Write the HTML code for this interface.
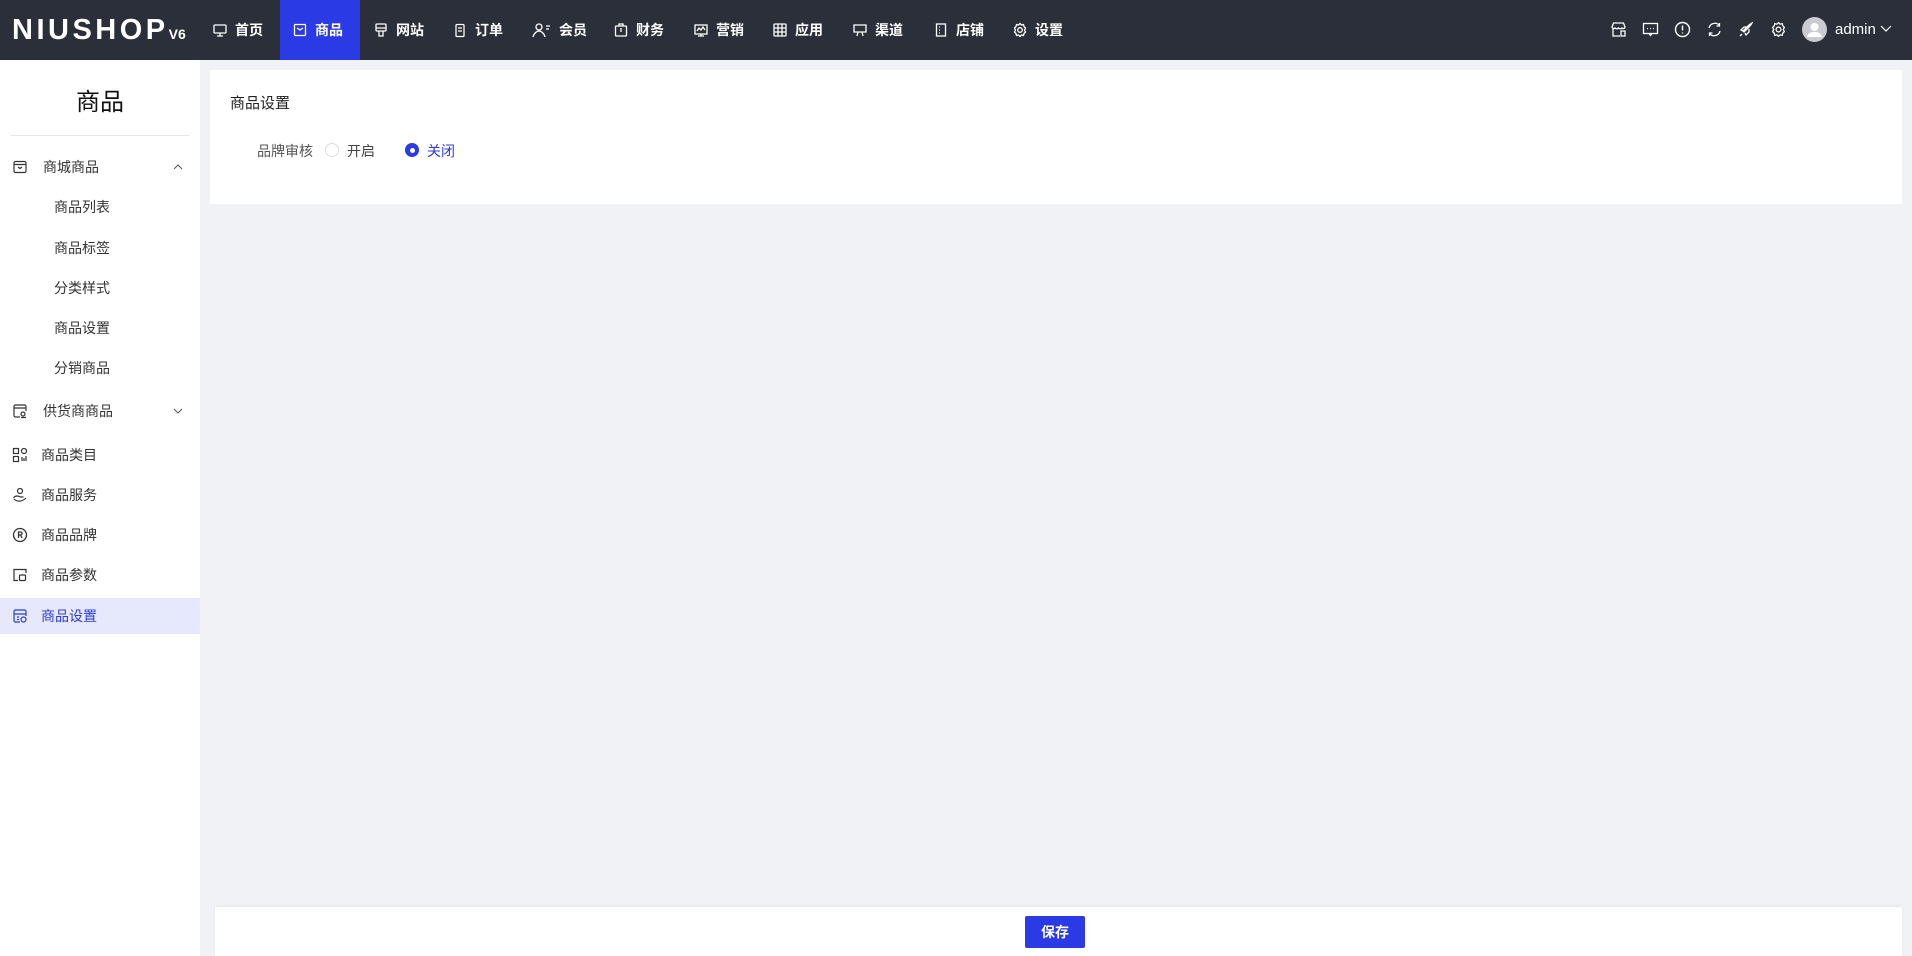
<!DOCTYPE html>
<html><head><meta charset="utf-8"><style>
*{margin:0;padding:0;box-sizing:border-box}
body{width:1912px;height:956px;overflow:hidden;background:#f0f2f5;font-family:"Liberation Sans","Noto Sans CJK SC",sans-serif;position:relative}
.hd{position:absolute;left:0;top:0;width:1912px;height:60px;background:#2b2f3a;color:#fff}
.logo{position:absolute;left:12px;top:14px;font-size:29px;font-weight:bold;letter-spacing:3.5px;font-family:"Liberation Sans",sans-serif}
.logo small{font-size:14px;margin-left:0px;letter-spacing:0}
.nav{position:absolute;top:0;height:60px;display:flex;align-items:center;font-size:14px;font-weight:bold;padding:0 12px}
.nav svg{margin-right:7px}
.act{background:#2a3be6}
.ri{position:absolute;top:21px}
.sb{position:absolute;left:0;top:60px;width:200px;height:896px;background:#fff}
.sb h1{position:absolute;left:0;width:200px;top:22px;text-align:center;font-size:24px;font-weight:normal;color:#111}
.div{position:absolute;left:10px;top:75px;width:180px;height:1px;background:#e8e8e8}
.mi{position:absolute;left:0;width:200px;height:36px;font-size:14px;color:#333;display:flex;align-items:center}
.mi .ic{position:absolute;left:12px;top:10px}
.mi span{position:absolute}
.card{position:absolute;left:210px;top:70px;width:1692px;height:134px;background:#fff}
.ft{position:absolute;left:215px;top:907px;width:1687px;height:49px;background:#fff;box-shadow:0 -1px 3px rgba(0,0,0,.05)}
.btn{position:absolute;left:810px;top:9px;width:60px;height:32px;background:#2a3be6;color:#fff;font-size:14px;font-weight:bold;text-align:center;line-height:32px;border-radius:2px}
</style></head><body>
<div class="hd">
<div class="logo">NIUSHOP<small>V6</small></div>
<div class="nav" style="left:200px"><svg width="16" height="16" viewBox="0 0 16 16" fill="none" stroke="#fff" stroke-width="1.3"><rect x="2" y="3" width="12" height="8" rx="1"/><path d="M8 11v3M5 14h6"/></svg>首页</div>
<div class="nav act" style="left:280px;width:80px"><svg width="16" height="16" viewBox="0 0 16 16" fill="none" stroke="#fff" stroke-width="1.3"><rect x="2.5" y="2.5" width="11" height="11" rx="1"/><path d="M5 6l3 2 3-2"/></svg>商品</div>
<div class="nav" style="left:361px"><svg width="16" height="16" viewBox="0 0 16 16" fill="none" stroke="#fff" stroke-width="1.3"><rect x="3" y="2" width="10" height="7" rx="1"/><path d="M3 6h10M6 9v5h4V9"/></svg>网站</div>
<div class="nav" style="left:440px"><svg width="16" height="16" viewBox="0 0 16 16" fill="none" stroke="#fff" stroke-width="1.3"><rect x="4" y="2.5" width="8" height="12" rx="1"/><path d="M6 6h4M6 9h4"/></svg>订单</div>
<div class="nav" style="left:520px"><svg width="20" height="16" viewBox="0 0 20 16" fill="none" stroke="#fff" stroke-width="1.3"><circle cx="7" cy="5" r="3"/><path d="M1 15c1-4 4-6 6-6s5 2 6 6M14 4h4M14 7h3"/></svg>会员</div>
<div class="nav" style="left:601px"><svg width="16" height="16" viewBox="0 0 16 16" fill="none" stroke="#fff" stroke-width="1.3"><rect x="2.5" y="4" width="11" height="10" rx="1"/><path d="M6 4V2h4v2M8 6v4"/></svg>财务</div>
<div class="nav" style="left:681px"><svg width="16" height="16" viewBox="0 0 16 16" fill="none" stroke="#fff" stroke-width="1.3"><rect x="2" y="3" width="12" height="9"/><path d="M4 9l2-3 2 2 2-3 2 3M8 12v2M5 14h6"/></svg>营销</div>
<div class="nav" style="left:760px"><svg width="16" height="16" viewBox="0 0 16 16" fill="none" stroke="#fff" stroke-width="1.3"><rect x="2" y="2" width="12" height="12" rx="1"/><path d="M2 6h12M2 10h12M6 2v12M10 2v12"/></svg>应用</div>
<div class="nav" style="left:840px"><svg width="16" height="16" viewBox="0 0 16 16" fill="none" stroke="#fff" stroke-width="1.3"><path d="M2 3h12v7H2zM6 10l-1 4M10 10l1 4"/></svg>渠道</div>
<div class="nav" style="left:921px"><svg width="16" height="16" viewBox="0 0 16 16" fill="none" stroke="#fff" stroke-width="1.3"><rect x="3.5" y="2" width="9" height="12"/><path d="M6 5h1M6 8h1M6 11h1"/></svg>店铺</div>
<div class="nav" style="left:1000px"><svg width="16" height="16" viewBox="0 0 16 16" fill="none" stroke="#fff" stroke-width="1.3"><circle cx="8" cy="8" r="2.3"/><path d="M8 1.5l1.5 1.5 2-.5.5 2 1.5 1.5-1 2 1 2-1.5 1.5-.5 2-2-.5L8 14.5 6.5 13l-2 .5-.5-2L2.5 10l1-2-1-2L4 4.5l.5-2 2 .5z"/></svg>设置</div>
<svg class="ri" style="left:1610px" width="17" height="17" viewBox="0 0 17 17" fill="none" stroke="#fff" stroke-width="1.3"><path d="M2 6l1.5-4h10L15 6c0 1.5-2 2-3 1-1 1-3 1-3.5 0-1 1-3 1-3.5 0-1 1-3 .5-3-1zM3 8v7h7M11 10h4v5h-4z"/></svg>
<svg class="ri" style="left:1642px" width="17" height="17" viewBox="0 0 17 17" fill="none" stroke="#fff" stroke-width="1.3"><rect x="1.5" y="2.5" width="14" height="10"/><path d="M7 12.5l1.5 2 1.5-2M5 7.5h1M8 7.5h1M11 7.5h1"/></svg>
<svg class="ri" style="left:1674px" width="17" height="17" viewBox="0 0 17 17" fill="none" stroke="#fff" stroke-width="1.4"><circle cx="8.5" cy="8.5" r="7"/><path d="M8.5 4.5v5M8.5 11.5v1"/></svg>
<svg class="ri" style="left:1706px" width="17" height="17" viewBox="0 0 17 17" fill="none" stroke="#fff" stroke-width="1.3"><path d="M3 7a6 6 0 0 1 10.5-2.5M14 10a6 6 0 0 1-10.5 2.5M13.5 2v3h-3M3.5 15v-3h3"/></svg>
<svg class="ri" style="left:1738px" width="17" height="17" viewBox="0 0 17 17" fill="none" stroke="#fff" stroke-width="1.3"><path d="M6 11l5-5c2-2 3-4 3-4s-2 1-4 3L5 10zM5 10L3 9l3-3h3M7 12l1 2 3-3V8M4 13l-2 2"/></svg>
<svg class="ri" style="left:1770px" width="17" height="17" viewBox="0 0 16 16" fill="none" stroke="#fff" stroke-width="1.2"><circle cx="8" cy="8" r="2.3"/><path d="M8 1.5l1.5 1.5 2-.5.5 2 1.5 1.5-1 2 1 2-1.5 1.5-.5 2-2-.5L8 14.5 6.5 13l-2 .5-.5-2L2.5 10l1-2-1-2L4 4.5l.5-2 2 .5z"/></svg>
<svg style="position:absolute;left:1802px;top:17px" width="25" height="25" viewBox="0 0 25 25"><circle cx="12.5" cy="12.5" r="12.5" fill="#c9cbd0"/><circle cx="12.5" cy="10" r="4" fill="#fff"/><path d="M5 20c1-4 4-5 7.5-5s6.5 1 7.5 5z" fill="#fff"/></svg>
<div style="position:absolute;left:1835px;top:21px;font-size:15px">admin</div>
<svg style="position:absolute;left:1880px;top:25px" width="12" height="8" viewBox="0 0 12 8" fill="none" stroke="#fff" stroke-width="1.2"><path d="M1 1l5 5 5-5"/></svg>
</div>
<div class="sb">
<h1>商品</h1>
<div class="div"></div>
<div class="mi" style="top:89px"><svg class="ic" width="16" height="16" viewBox="0 0 16 16" fill="none" stroke="#333" stroke-width="1.2"><rect x="2" y="2.5" width="12" height="11" rx="1.5"/><path d="M2 5.5h12M6 8l2 1.5L10 8"/></svg><span style="left:43px">商城商品</span><svg style="position:absolute;left:173px;top:15px" width="10" height="6" viewBox="0 0 10 6" fill="none" stroke="#555"><path d="M1 5l4-4 4 4"/></svg></div>
<div class="mi" style="top:129px"><span style="left:54px">商品列表</span></div>
<div class="mi" style="top:170px"><span style="left:54px">商品标签</span></div>
<div class="mi" style="top:210px"><span style="left:54px">分类样式</span></div>
<div class="mi" style="top:250px"><span style="left:54px">商品设置</span></div>
<div class="mi" style="top:290px"><span style="left:54px">分销商品</span></div>
<div class="mi" style="top:333px"><svg class="ic" width="16" height="16" viewBox="0 0 16 16" fill="none" stroke="#333" stroke-width="1.2"><path d="M14 8V3.5A1.5 1.5 0 0 0 12.5 2h-9A1.5 1.5 0 0 0 2 3.5v9A1.5 1.5 0 0 0 3.5 14H8M2 5h12"/><circle cx="11" cy="11" r="2"/><path d="M9 14.5h5"/></svg><span style="left:43px">供货商商品</span><svg style="position:absolute;left:173px;top:15px" width="10" height="6" viewBox="0 0 10 6" fill="none" stroke="#555"><path d="M1 1l4 4 4-4"/></svg></div>
<div class="mi" style="top:377px"><svg class="ic" width="16" height="16" viewBox="0 0 16 16" fill="none" stroke="#333" stroke-width="1.2"><rect x="1.5" y="1.5" width="5" height="5"/><rect x="9.5" y="1.5" width="5" height="5" rx="2.5"/><rect x="1.5" y="9.5" width="5" height="5"/><path d="M10 10v4M12 11v3M14 9v5"/></svg><span style="left:41px">商品类目</span></div>
<div class="mi" style="top:417px"><svg class="ic" width="16" height="16" viewBox="0 0 16 16" fill="none" stroke="#333" stroke-width="1.2"><circle cx="8" cy="4" r="2.5"/><path d="M1.5 11c2-3 5-2 7-1h3M2 12c3 3 8 3 12-1"/></svg><span style="left:41px">商品服务</span></div>
<div class="mi" style="top:457px"><svg class="ic" width="16" height="16" viewBox="0 0 16 16" fill="none" stroke="#333" stroke-width="1.3"><circle cx="8" cy="8" r="6.5"/><path d="M6.5 11V5h2a1.5 1.5 0 0 1 0 3h-2M8.5 8l1.5 3"/></svg><span style="left:41px">商品品牌</span></div>
<div class="mi" style="top:497px"><svg class="ic" width="16" height="16" viewBox="0 0 16 16" fill="none" stroke="#333" stroke-width="1.2"><path d="M14 6V2.5H2v11h4"/><rect x="7.5" y="8" width="6" height="5.5" rx="1"/></svg><span style="left:41px">商品参数</span></div>
<div class="mi" style="top:538px;background:#e6e9fb;color:#2a3be6"><svg class="ic" width="16" height="16" viewBox="0 0 16 16" fill="none" stroke="#2a3be6" stroke-width="1.2"><path d="M14 8V3.5A1.5 1.5 0 0 0 12.5 2h-9A1.5 1.5 0 0 0 2 3.5v9A1.5 1.5 0 0 0 3.5 14H8M2 6h12M5 9h2M5 11.5h2"/><circle cx="11.5" cy="11.5" r="2.5"/></svg><span style="left:41px">商品设置</span></div>
</div>
<div class="card">
<div style="position:absolute;left:20px;top:22px;font-size:15px;color:#222">商品设置</div>
<div style="position:absolute;left:47px;top:71px;font-size:14px;color:#555">品牌审核</div>
<div style="position:absolute;left:115px;top:73px;width:14px;height:14px;border:1px solid #ddd;border-radius:50%"></div>
<div style="position:absolute;left:137px;top:71px;font-size:14px;color:#444">开启</div>
<div style="position:absolute;left:195px;top:73px;width:14px;height:14px;background:#2a3be6;border-radius:50%"><div style="position:absolute;left:4.5px;top:4.5px;width:5px;height:5px;background:#fff;border-radius:50%"></div></div>
<div style="position:absolute;left:217px;top:71px;font-size:14px;color:#2a3be6">关闭</div>
</div>
<div class="ft"><div class="btn">保存</div></div>
</body></html>
